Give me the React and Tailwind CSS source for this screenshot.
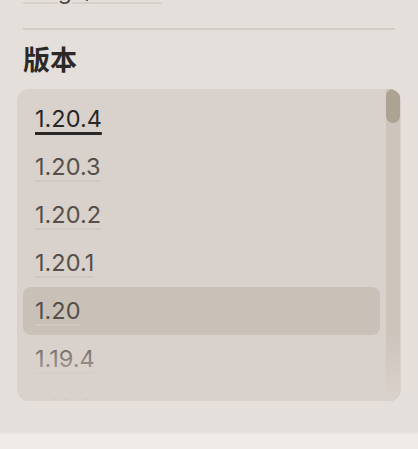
import React, { useState } from 'react';

const versions = ['1.20.4', '1.20.3', '1.20.2', '1.20.1', '1.20', '1.19.4', '1.19.3', '1.19.2', '1.19.1', '1.19'];

export default function App() {
  const [selected] = useState('1.20.4');
  const hovered = '1.20';

  return (
    <div className="w-[418px] h-[449px] overflow-hidden bg-[#efebe7] font-['Inter','Noto_Sans_CJK_SC',sans-serif]">
      {/* Panel */}
      <div className="h-[432px] bg-[#e4dfdb] px-[23px] shadow-[0_1px_2px_rgba(0,0,0,0.06)] flex flex-col">
        <div className="-mt-[24px] h-[30px] flex items-end">
          <span className="text-[23px] leading-[30px] text-[#4e4a46] underline decoration-[#d6d0ca] decoration-2 underline-offset-[3px]">
            Forge/Fabric
          </span>
        </div>

        <div className="mt-[22px] h-[2px] bg-[#d3cdc8]" />

        <h2 className="mt-[14px] text-[27px] leading-[34px] font-bold text-[#2b2826]">版本</h2>

        {/* Version list */}
        <div className="relative -mx-[6px] mt-[11px] h-[312px] rounded-[12px] bg-[#d9d1cb] overflow-hidden flex">
          <ul className="flex-1 h-full overflow-hidden pt-[6px]">
            {versions.map((v) => (
              <li
                key={v}
                className={`mx-[6px] h-[48px] px-[12px] flex items-center rounded-[8px] ${v === hovered ? 'bg-[#c9c1b8]' : ''}`}
              >
                <span
                  className={`text-[23.5px] leading-[28px] underline underline-offset-[5px] ${
                    v === selected
                      ? 'text-[#2a2826] decoration-[#2a2826] decoration-[3px]'
                      : 'text-[#55504b] decoration-[#d0c8c1] decoration-2'
                  }`}
                >
                  {v}
                </span>
              </li>
            ))}
          </ul>
          {/* Scrollbar */}
          <div className="w-[14px] mr-px h-full bg-[#cdc5bc]">
            <div className="h-[34px] rounded-full bg-[#aca393]" />
          </div>
          <div className="pointer-events-none absolute left-0 right-0 bottom-0 h-[70px] bg-gradient-to-b from-[#d9d1cb00] to-[#d9d1cb]" />
        </div>
      </div>
    </div>
  );
}
